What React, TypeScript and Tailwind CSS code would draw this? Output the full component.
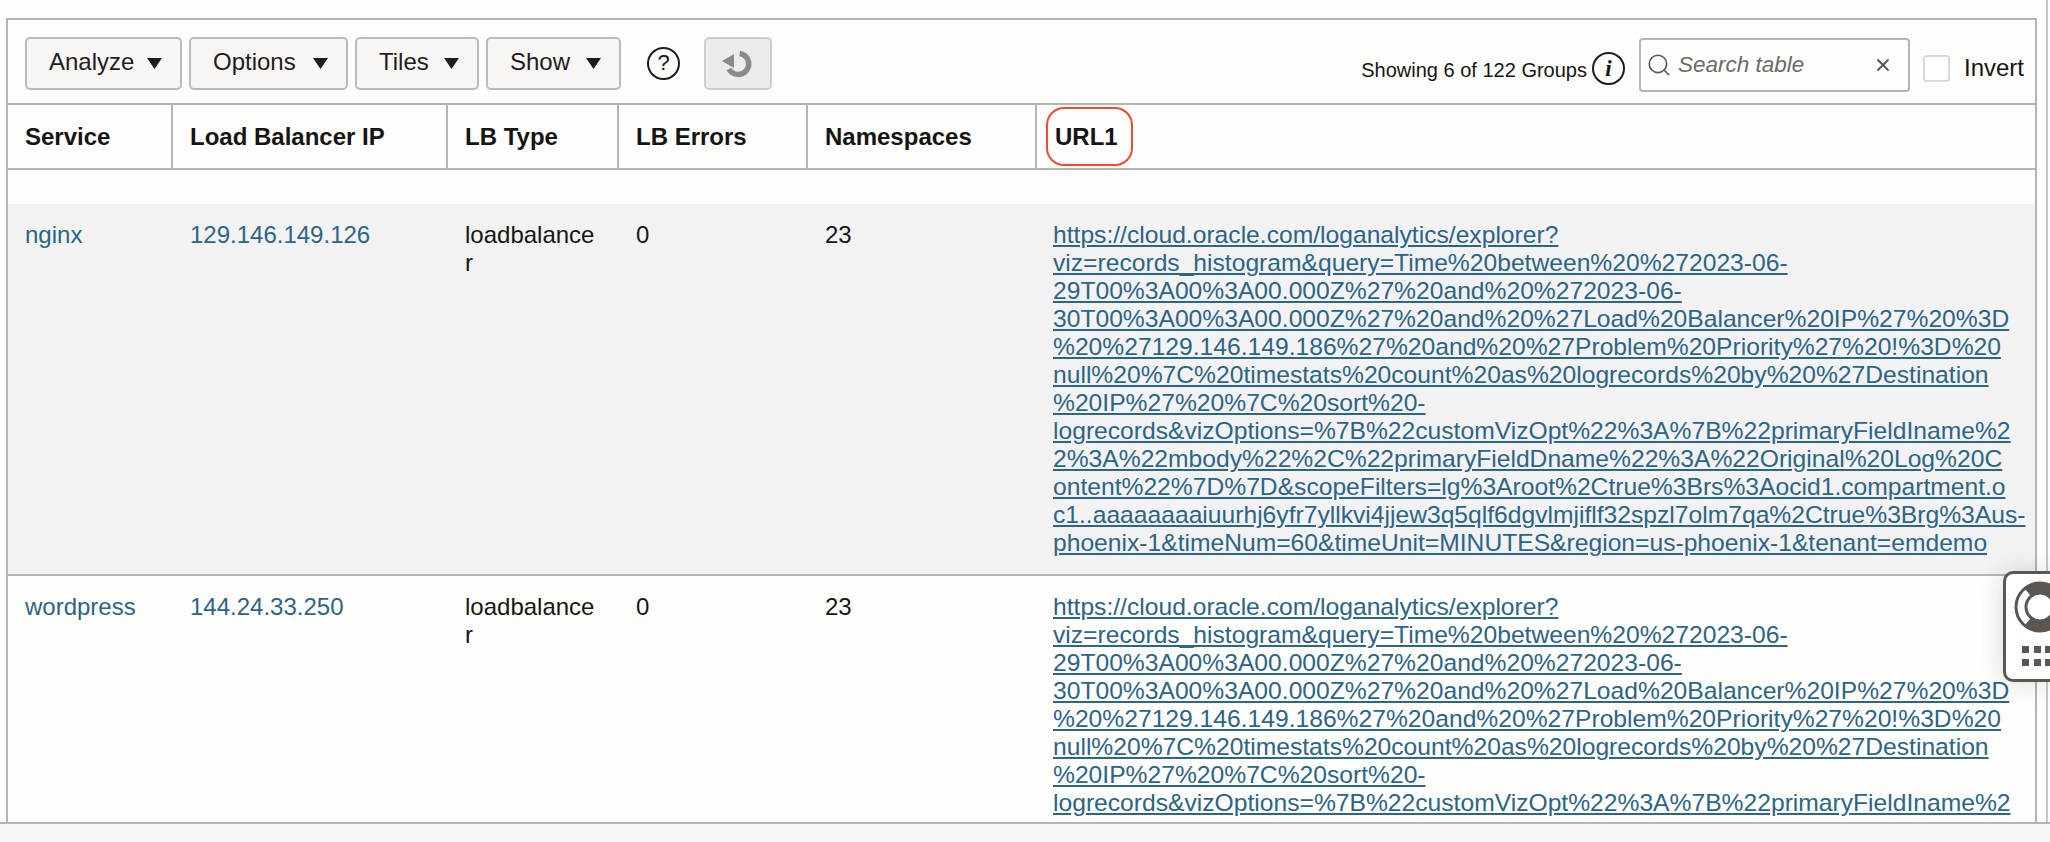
import { Search, X } from 'lucide-react';

const urlLines = [
  'https://cloud.oracle.com/loganalytics/explorer?',
  'viz=records_histogram&query=Time%20between%20%272023-06-',
  '29T00%3A00%3A00.000Z%27%20and%20%272023-06-',
  '30T00%3A00%3A00.000Z%27%20and%20%27Load%20Balancer%20IP%27%20%3D',
  '%20%27129.146.149.186%27%20and%20%27Problem%20Priority%27%20!%3D%20',
  'null%20%7C%20timestats%20count%20as%20logrecords%20by%20%27Destination',
  '%20IP%27%20%7C%20sort%20-',
  'logrecords&vizOptions=%7B%22customVizOpt%22%3A%7B%22primaryFieldIname%2',
  '2%3A%22mbody%22%2C%22primaryFieldDname%22%3A%22Original%20Log%20C',
  'ontent%22%7D%7D&scopeFilters=lg%3Aroot%2Ctrue%3Brs%3Aocid1.compartment.o',
  'c1..aaaaaaaaiuurhj6yfr7yllkvi4jjew3q5qlf6dgvlmjiflf32spzl7olm7qa%2Ctrue%3Brg%3Aus-',
  'phoenix-1&timeNum=60&timeUnit=MINUTES&region=us-phoenix-1&tenant=emdemo',
];

// second row runs past the bottom of the panel, only its first 8 lines show
const rows = [
  { service: 'nginx', ip: '129.146.149.126', shaded: true, lines: urlLines },
  { service: 'wordpress', ip: '144.24.33.250', shaded: false, lines: urlLines.slice(0, 8) },
];

function MenuButton({ label, width }: { label: string; width: string }) {
  return (
    <button className={`${width} h-[53px] flex items-center justify-between pl-[22px] pr-[18px] bg-[#f7f6f5] border-2 border-[#bdb9b4] rounded-[5px] text-[24px] text-[#1f1d1b]`}>
      <span className="-mt-[2px]">{label}</span>
      <svg width="15" height="11" viewBox="0 0 15 11">
        <polygon points="0,0 15,0 7.5,11" fill="#1f1d1b" />
      </svg>
    </button>
  );
}

function HeaderCell({ label }: { label: string }) {
  return (
    <th className="h-[65px] px-[17px] text-left text-[24px] font-bold text-[#161513] border-b-2 border-r-2 border-[#b8b3ad]">
      {label}
    </th>
  );
}

export default function App() {
  return (
    <div className="relative h-[842px] overflow-hidden bg-[#fdfdfc] font-['Liberation_Sans',Arial,sans-serif] text-[#161513]">
      <div className="h-[822px] mr-[2px] pt-[18px] pr-[9px] pl-[6px] border-r-2 border-[#c9c5c0]">
        <div className="h-full overflow-hidden border-2 border-b-0 border-[#b8b3ad]">
          {/* Toolbar */}
          <div className="h-[85px] pt-[3px] flex items-center pl-[17px] pr-[11px] border-b-2 border-[#b8b3ad]">
            <div className="flex items-center gap-[7px]">
              <MenuButton label="Analyze" width="w-[157px]" />
              <MenuButton label="Options" width="w-[159px]" />
              <MenuButton label="Tiles" width="w-[124px]" />
              <MenuButton label="Show" width="w-[135px]" />
            </div>
            <div className="ml-[26px] w-[33px] h-[33px] rounded-full border-2 border-[#1f1d1b] flex items-center justify-center text-[22px] leading-none">?</div>
            <button className="ml-[24px] w-[68px] h-[53px] flex items-center justify-center bg-[#ecebeb] border-2 border-[#cfcdcb] rounded-[5px]">
              <svg width="34" height="30" viewBox="0 0 34 30">
                <path d="M18.7 5.5 A10.5 10.5 0 1 1 8 21" fill="none" stroke="#8c8a88" strokeWidth="5.5" />
                <polygon points="1,13 13,6 13,20" fill="#8c8a88" />
              </svg>
            </button>

            <div className="ml-auto flex items-center">
              <span className="text-[20px] text-[#161513] mr-[5px] mt-[13px]">Showing 6 of 122 Groups</span>
              <div className="w-[33px] h-[33px] rounded-full border-2 border-[#1f1d1b] flex items-center justify-center text-[23px] italic font-['Liberation_Serif',serif] font-bold leading-none mt-[10px]">i</div>
              <div className="ml-[14px] w-[271px] h-[54px] flex items-center pl-[5px] pr-[15px] border-2 border-[#b8b3ad] rounded-[4px] mt-[3px]">
                <Search size={26} strokeWidth={1.5} className="text-[#5b5652] shrink-0" />
                <span className="ml-[6px] text-[22.5px] italic text-[#6f6a66]">Search table</span>
                <X size={20} strokeWidth={2.25} className="ml-auto text-[#5b5652]" />
              </div>
              <div className="ml-[13px] w-[27px] h-[27px] rounded-[4px] border-2 border-[#dad8d5] bg-white mt-[11px]" />
              <span className="ml-[14px] text-[24px] mt-[10px]">Invert</span>
            </div>
          </div>

          {/* Table */}
          <table className="w-full table-fixed border-separate border-spacing-0">
            <colgroup>
              <col className="w-[165px]" />
              <col className="w-[275px]" />
              <col className="w-[171px]" />
              <col className="w-[189px]" />
              <col className="w-[229px]" />
              <col />
            </colgroup>
            <thead>
              <tr>
                <HeaderCell label="Service" />
                <HeaderCell label="Load Balancer IP" />
                <HeaderCell label="LB Type" />
                <HeaderCell label="LB Errors" />
                <HeaderCell label="Namespaces" />
                <th className="h-[65px] pl-[9px] text-left border-b-2 border-[#b8b3ad]">
                  <span className="inline-flex items-center w-[87px] h-[59px] pl-[7px] border-[2.5px] border-[#ee4b2f] rounded-[18px] text-[24px] font-bold text-[#161513]">URL1</span>
                </th>
              </tr>
            </thead>
            <tbody>
              <tr>
                <td colSpan={6} className="h-[34px]" />
              </tr>
              {rows.map((row) => {
                const cell = `align-top pt-[17px] pb-[17px] leading-[28px] border-b-2 border-[#b8b3ad] ${row.shaded ? 'bg-[#f2f2f3]' : ''}`;
                return (
                  <tr key={row.service}>
                    <td className={`${cell} px-[17px] text-[24px] text-[#2b6587]`}>{row.service}</td>
                    <td className={`${cell} px-[17px] text-[24px] text-[#2b6587]`}>{row.ip}</td>
                    <td className={`${cell} px-[17px] text-[24px] break-all`}>loadbalancer</td>
                    <td className={`${cell} px-[17px] text-[24px]`}>0</td>
                    <td className={`${cell} px-[17px] text-[24px]`}>23</td>
                    <td className={`${cell} pl-[16px] whitespace-nowrap text-[24.65px]`}>
                      <a className="text-[#2b6587] underline" href="#">
                        {row.lines.map((line, i) => (
                          <span key={i}>
                            {line}
                            {i < row.lines.length - 1 && <br />}
                          </span>
                        ))}
                      </a>
                    </td>
                  </tr>
                );
              })}
            </tbody>
          </table>
        </div>
      </div>

      {/* Bottom strip */}
      <div className="h-[20px] border-t-2 border-[#b8b3ad] bg-[#f9f8f6]" />

      {/* Help widget */}
      <div className="absolute right-0 top-[571px] w-[47px] h-[111px] bg-white border-[3px] border-r-0 border-[#5b5652] rounded-l-[10px] shadow-[0_0_26px_rgba(0,0,0,0.14)] overflow-hidden">
        <svg className="absolute left-[8px] top-[7px]" width="52" height="52" viewBox="0 0 52 52">
          <circle cx="26" cy="26" r="24" fill="none" stroke="#5b5652" strokeWidth="3" />
          <circle cx="26" cy="26" r="14" fill="none" stroke="#5b5652" strokeWidth="3" />
          <path d="M13.8 11.4 A19 19 0 0 1 38.2 11.4" fill="none" stroke="#5b5652" strokeWidth="12" />
          <path d="M13.8 40.6 A19 19 0 0 0 38.2 40.6" fill="none" stroke="#5b5652" strokeWidth="12" />
        </svg>
        <div className="absolute left-[16px] top-[72px] grid grid-cols-3 gap-x-[7px] gap-y-[6px]">
          {[0, 1, 2, 3, 4, 5].map((i) => (
            <div key={i} className="w-[7px] h-[7px] bg-[#5b5652]" />
          ))}
        </div>
      </div>
    </div>
  );
}
